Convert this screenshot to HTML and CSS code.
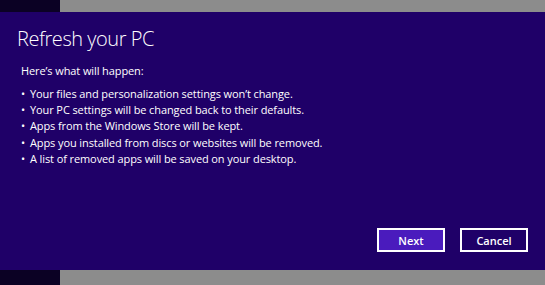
FILE: index.html
```html
<!DOCTYPE html>
<html lang="en">
<head>
    <meta charset="UTF-8">
    <title>Refresh your PC</title>
    <link rel="stylesheet" href="styles.css">
</head>
<body>
    <div class="screen">
        <div class="edge">
            <div class="edge-dark"></div>
            <div class="edge-gray"></div>
        </div>
        <div class="dialog">
            <h1 class="title">Refresh your PC</h1>
            <p class="intro">Here’s what will happen:</p>
            <ul class="changes">
                <li>Your files and personalization settings won’t change.</li>
                <li>Your PC settings will be changed back to their defaults.</li>
                <li>Apps from the Windows Store will be kept.</li>
                <li>Apps you installed from discs or websites will be removed.</li>
                <li>A list of removed apps will be saved on your desktop.</li>
            </ul>
            <div class="actions">
                <button class="btn btn-primary">Next</button>
                <button class="btn">Cancel</button>
            </div>
        </div>
        <div class="edge">
            <div class="edge-dark"></div>
            <div class="edge-gray"></div>
        </div>
    </div>
</body>
</html>
```

FILE: styles.css
```css
:root {
    --bg: #1f0068;
    --accent: #4a1bbd;
    --text: #ffffff;
    --edge-dark: #0b0124;
    --edge-gray: #8c8c8c;
}

* {
    margin: 0;
    padding: 0;
    box-sizing: border-box;
}

body {
    font-family: "Open Sans", "Noto Sans", sans-serif;
    background-color: var(--bg);
    color: var(--text);
}

.screen {
    width: 545px;
    height: 285px;
    display: flex;
    flex-direction: column;
}

.edge {
    display: flex;
    height: 12px;
    flex-shrink: 0;
}

.edge:last-child {
    height: 15px;
}

.edge-dark {
    width: 60px;
    background-color: var(--edge-dark);
}

.edge-gray {
    flex: 1;
    background-color: var(--edge-gray);
}

.dialog {
    flex: 1;
    display: flex;
    flex-direction: column;
    padding: 14px 17px 0 17px;
}

.title {
    font-size: 20px;
    font-weight: 300;
    line-height: 26px;
    letter-spacing: -0.45px;
}

.intro {
    font-size: 11px;
    line-height: 16.25px;
    letter-spacing: -0.1px;
    margin: 10.5px 0 0 4px;
}

.changes {
    list-style: none;
    margin: 7px 0 0 4px;
    font-size: 11px;
    line-height: 16.25px;
    letter-spacing: -0.1px;
}

.changes li {
    position: relative;
    padding-left: 9px;
}

.changes li::before {
    content: "•";
    position: absolute;
    left: 0;
}

.actions {
    margin-top: auto;
    margin-bottom: 18px;
    display: flex;
    justify-content: flex-end;
    gap: 15px;
}

.btn {
    width: 68px;
    height: 24px;
    border: 2px solid #ffffff;
    background-color: var(--bg);
    color: var(--text);
    font-family: "Open Sans", "Noto Sans", sans-serif;
    font-size: 11px;
    font-weight: 600;
}

.btn-primary {
    background-color: var(--accent);
}
```
